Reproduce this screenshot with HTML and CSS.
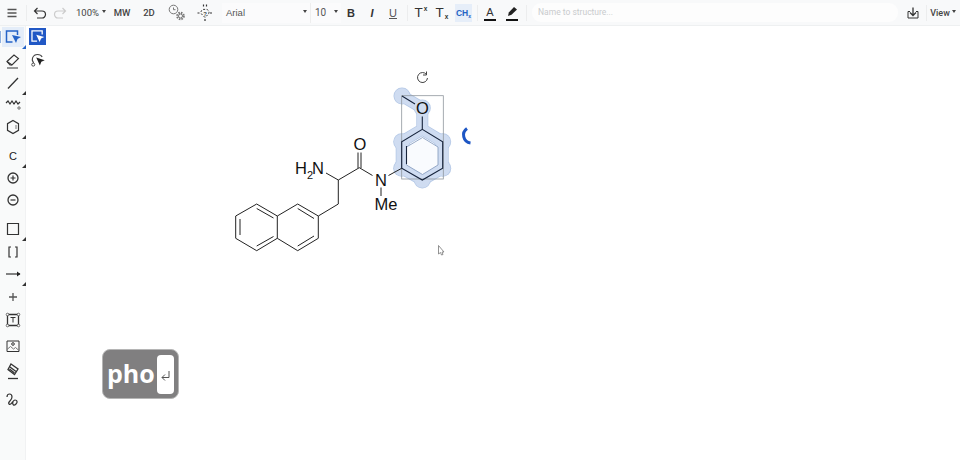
FILE: index.html
```html
<!DOCTYPE html>
<html lang="en">
<head>
<meta charset="utf-8">
<title>Structure editor</title>
<link rel="stylesheet" href="styles.css">
</head>
<body>
<header class="toolbar">
  <button class="tb w20 ml2"><svg viewBox="0 0 20 20"><path d="M5.500 6.500h9M5.500 10h9M5.500 13.500h9" class="s13 grey2"/></svg></button>
  <span class="sep ml4"></span>
  <button class="tb w20 ml3"><svg viewBox="0 0 20 20"><path d="M7.500 5 4.500 8l3 3M4.500 8h7.500a3.500 3.500 0 0 1 0 7H7" class="s12"/></svg></button>
  <button class="tb w20"><svg viewBox="0 0 20 20"><path d="M12.500 5l3 3-3 3M15.500 8H8a3.500 3.500 0 0 0 0 7h5" class="s12 faint"/></svg></button>
  <button class="tb txt w30 ml6">100%<i class="caret"></i></button>
  <button class="tb txt med w20 ml6">MW</button>
  <button class="tb txt med w20 ml7">2D</button>
  <button class="tb w20 ml8"><svg viewBox="0 0 20 20"><circle cx="6.500" cy="6.500" r="4.300" class="s1 grey"/><path d="M6.500 4.500v2.200h2" class="s1 grey"/><circle cx="13.500" cy="13" r="3.300" class="s2 grey dash-gear"/><circle cx="13.500" cy="13" r="2" class="s1 grey"/></svg></button>
  <button class="tb w20 ml8"><svg viewBox="0 0 20 20"><path d="M10 14.500 6.500 11a3 3 0 0 1 3.500-4.500 3 3 0 0 1 3.500 4.500z" class="s1 dash"/><path d="M2.500 10h2.500M15 10h2.500M8.500 1.500v3M11.500 1.500v3M10 16v3" class="s12 dash"/><text x="10" y="12.500" class="qmark">?</text></svg></button>
  <div class="select font ml7">Arial<i class="caret"></i></div>
  <div class="select size">10<i class="caret"></i></div>
  <button class="tb fmt w20 b">B</button>
  <button class="tb fmt w20 ml1 it">I</button>
  <button class="tb fmt w20 ml1 un">U</button>
  <span class="sep ml4"></span>
  <button class="tb fmt big w20 ml3"><span>T<sup>x</sup></span></button>
  <button class="tb fmt big w20 ml1"><span>T<sub>x</sub></span></button>
  <button class="tb chem ml3"><span>CH<sub>x</sub></span></button>
  <span class="sep ml5"></span>
  <button class="tb fmt colour ml6">A</button>
  <button class="tb colour pen ml10"><svg viewBox="0 0 12 15"><path d="M2 12l.8-3.500L8 3l3 2.500-5.500 5.300z" class="fillk"/></svg></button>
  <span class="sep ml8"></span>
  <div class="search">Name to structure...</div>
  <button class="tb w20 ml5"><svg viewBox="0 0 20 20"><path d="M10 4.500v7.500M7 9.500l3 3 3-3" class="s13"/><path d="M7 8.500H5v6.500h10V8.500h-2" class="s1"/></svg></button>
  <span class="sep ml3"></span>
  <button class="tb txt med view ml4">View<i class="caret"></i></button>
</header>
<div class="body">
  <nav class="side">
    <button class="tool active corner"><svg viewBox="0 0 20 20"><path d="M14.500 8V4h-11v11h6" class="s15 blue"/><path d="M9 8l9 2-3.500 2-1.500 4z" class="fillb"/></svg></button>
    <button class="tool g3"><svg viewBox="0 0 20 20"><path d="M4 11.500 11 5l4.500 3.500-6.500 6.500H7z" class="s11"/><path d="M4 11.500l5 3.500M4 18h11" class="s11"/></svg></button>
    <button class="tool g3 corner"><svg viewBox="0 0 20 20"><path d="M5 15.500 15 5" class="s13"/></svg></button>
    <button class="tool g1"><svg viewBox="0 0 20 20"><path d="M3 9l2-2 2 3 2-3 2 3 2-3 2 3 2-2" class="s12"/><path d="M15 13h2v2h-2z" class="s1 grey"/></svg></button>
    <button class="tool g3 corner"><svg viewBox="0 0 20 20"><path d="M10 3.500l5.500 3.200v6.600L10 16.500l-5.500-3.200V6.700z" class="s12"/><path d="M13 8v4" class="s1 grey"/></svg></button>
    <button class="tool g9 corner lett">C</button>
    <button class="tool g2"><svg viewBox="0 0 20 20"><circle cx="10" cy="10" r="5" class="s13"/><path d="M7.500 10h5M10 7.500v5" class="s12"/></svg></button>
    <button class="tool g2"><svg viewBox="0 0 20 20"><circle cx="10" cy="10" r="5" class="s13"/><path d="M7.500 10h5" class="s12"/></svg></button>
    <button class="tool g9 corner"><svg viewBox="0 0 20 20"><path d="M4.500 4.500h11v11h-11z" class="s12"/></svg></button>
    <button class="tool g3"><svg viewBox="0 0 20 20"><path d="M8 5H6v10h2M12 5h2v10h-2" class="s12"/></svg></button>
    <button class="tool g2 corner"><svg viewBox="0 0 20 20"><path d="M3 10h14" class="s12"/><path d="M14 7.500l3.500 2.500-3.500 2.500z" class="fillk"/></svg></button>
    <button class="tool g3"><svg viewBox="0 0 20 20"><path d="M6 10h8M10 6v8" class="s13 grey2"/></svg></button>
    <button class="tool g3"><svg viewBox="0 0 20 20"><path d="M4.500 4.500h11v11h-11z" class="s13"/><path d="M7.500 7.500h5M10 7.500v5" class="s1"/><circle cx="4.500" cy="4.500" r="1.300" class="dot"/><circle cx="15.500" cy="4.500" r="1.300" class="dot"/><circle cx="4.500" cy="15.500" r="1.300" class="dot"/><circle cx="15.500" cy="15.500" r="1.300" class="dot"/></svg></button>
    <button class="tool g6"><svg viewBox="0 0 20 20"><path d="M4 5h12v10.500H4z" class="s1"/><circle cx="10" cy="8" r="1.300" class="s1"/><path d="M4 13.500l3.500-3 3 2.500 2-1.500 3.500 3" class="s1 grey"/></svg></button>
    <button class="tool g5"><svg viewBox="0 0 20 20"><path d="M8 3l7 5-3.500 5.500L5 8.500z" class="s13"/><path d="M7 6l6 4.500M6.500 8l5 4" class="s13"/><path d="M5 17.500h10" class="s13"/></svg></button>
    <button class="tool g8"><svg viewBox="0 0 20 20"><path d="M4 8c0-4 5-4 5 0s-5 5-3 7 4-4 6-4 3 2 1 4-4 1-3-2" class="s12"/></svg></button>
  </nav>
  <main class="canvas">
    <div class="flyout">
      <button class="fly on"><svg viewBox="0 0 20 20"><path d="M15.500 7.500V3.500H3.500v12h6" class="s15 white"/><path d="M8.500 8l9.500 2.500-3.800 1.800-1.700 4.200z" class="fillw"/></svg></button>
      <button class="fly"><svg viewBox="0 0 20 20"><path d="M5.500 14C2 10.500 4.500 4 10 4c2.500 0 4.500 1 5.500 3" class="s12 dark"/><circle cx="5" cy="16" r="1.800" class="s1"/><path d="M8.500 7.500l10 3.500-4 1.700-1.700 4.300z" class="fillk"/></svg></button>
    </div>
    <svg class="chem-art" viewBox="0 0 960 460" xmlns="http://www.w3.org/2000/svg">
      <g class="halo-edge">
        <path d="M402 96 422.300 108V129.300L442.700 141.700V168.300L422.300 180 401.700 168.300V141.700L422.300 129.300"/>
        <circle cx="402" cy="96" r="8.500"/><circle cx="422.300" cy="108" r="8.500"/><circle cx="442.700" cy="141.700" r="8.500"/><circle cx="442.700" cy="168.300" r="8.500"/><circle cx="422.300" cy="180" r="8.500"/><circle cx="401.700" cy="168.300" r="8.500"/><circle cx="401.700" cy="141.700" r="8.500"/>
      </g>
      <g class="halo">
        <path d="M402 96 422.300 108V129.300L442.700 141.700V168.300L422.300 180 401.700 168.300V141.700L422.300 129.300"/>
        <circle cx="402" cy="96" r="7.700"/><circle cx="422.300" cy="108" r="7.700"/><circle cx="442.700" cy="141.700" r="7.700"/><circle cx="442.700" cy="168.300" r="7.700"/><circle cx="422.300" cy="180" r="7.700"/><circle cx="401.700" cy="168.300" r="7.700"/><circle cx="401.700" cy="141.700" r="7.700"/>
      </g>
      <path class="inner-white" d="M422.500 137.500 438 147V165L422.500 174.500 406.500 165V147Z"/>
      <rect x="401.700" y="95.700" width="41.600" height="83.300" class="box"/>
      <g class="bond">
        <path d="M235.700 216V238.300L256.700 250.700 277.300 238.300 297.700 250.700 318.300 238.300V216L297.700 204 277.300 216 256.700 204Z"/>
        <path d="M277.300 216V238.300"/>
        <path d="M240 219V235M256.700 208.500 273.500 218M273.500 236.500 256.700 246M297.700 208.500 314 218.500M314 236 297.700 246"/>
        <path d="M318.300 216 338.300 204V180L326 173M338.300 180 359.300 167.700 372.500 175.500M358 168V152.500M361 168V152.500M381 187.500V196M388.500 175.500 401.700 168.300"/>
        <path class="sel" d="M401.700 168.300V141.700L422.300 129.300 442.700 141.700V168.300L422.300 180ZM422.300 129.300V116.500M415 104 402 96"/>
        <path class="sel" d="M406.500 164V146"/>
      </g>
      <text x="295" y="174" class="atom">H</text><text x="307" y="179" class="atom sm">2</text><text x="312" y="174" class="atom">N</text>
      <text x="360" y="150" class="atom mid">O</text>
      <text x="381" y="186" class="atom mid">N</text>
      <text x="386" y="209.500" class="atom mid">Me</text>
      <text x="422.300" y="114" class="atom mid">O</text>
      <path class="thin" d="M426.500 74.500A5 5 0 1 0 427.500 78M426.500 71.500V75H423"/>
      <path class="spin" d="M467 128.500A8 8 0 0 0 470.500 143"/>
      <path class="cursor" d="M438.500 245.500V254L440.500 252.500 441.500 255 443 254.500 442 252H444Z"/>
    </svg>
    <div class="badge"><span class="badge-text">pho</span><span class="key"><svg viewBox="0 0 17 39"><path d="M12 16v6.500H5M8 19.500l-3 3 3 3" class="s1 grey2"/></svg></span></div>
  </main>
</div>
</body>
</html>
```
FILE: styles.css
```css
* { box-sizing: border-box; }
html, body { margin: 0; height: 100%; }
body { width: 960px; height: 460px; overflow: hidden; background: #fff; font-family: "Roboto", "Liberation Sans", sans-serif; color: #333; }
button { border: 0; background: none; padding: 0; margin: 0; font: inherit; color: inherit; display: flex; align-items: center; justify-content: center; }
svg { display: block; }
.toolbar { height: 26px; background: #f8f9fa; border-bottom: 1px solid #eef0f1; display: flex; align-items: center; }
.tb { height: 20px; flex: none; }
.tb svg { width: 20px; height: 20px; }
.w20 { width: 20px; }
.w30 { width: 30px; }
.ml1 { margin-left: 1px; } .ml2 { margin-left: 2px; } .ml3 { margin-left: 3px; } .ml4 { margin-left: 4px; }
.ml5 { margin-left: 5px; } .ml6 { margin-left: 6px; } .ml7 { margin-left: 7px; } .ml8 { margin-left: 8px; } .ml10 { margin-left: 10px; }
.sep { width: 1px; height: 16px; background: #ecedee; flex: none; }
.txt { font-size: 9.500px; color: #444; }
.med { font-weight: 500; }
.caret { display: inline-block; margin-left: 3px; margin-bottom: 2px; border-left: 2.500px solid transparent; border-right: 2.500px solid transparent; border-top: 3px solid #444; }
.select { height: 20px; background: #fbfbfc; display: flex; align-items: center; justify-content: space-between; font-size: 9.500px; color: #555; flex: none; }
.font { width: 88px; padding: 0 3px 0 4px; font-family: "Liberation Sans", sans-serif; }
.size { width: 31px; padding: 0 3px 0 4px; border-left: 1px solid #eee; font-size: 10px; }
.fmt { font-family: "Liberation Sans", sans-serif; font-size: 11px; color: #333; }
.b { font-weight: 700; }
.it { font-style: italic; font-weight: 700; }
.un { text-decoration: underline; color: #555; }
.big { font-size: 13.500px; font-weight: 400; }
.big sup, .big sub { font-size: 6.500px; line-height: 0; font-weight: 700; margin-left: 1px; }
.big sup { vertical-align: 6px; }
.big sub { vertical-align: -2px; }
.chem { width: 17px; height: 18px; background: #e6eef9; color: #2463c4; font-size: 8.500px; font-weight: 700; font-family: "Liberation Sans", sans-serif; }
.chem sub { font-size: 5px; line-height: 0; vertical-align: -2px; }
.colour { width: 12px; height: 17px; border-bottom: 2px solid #111; }
.pen { width: 12px; }
.colour svg { width: 12px; height: 15px; }
.search { width: 366px; margin-left: 5px; height: 19px; padding-left: 6px; border-radius: 9px; background: #fdfdfd; font-size: 8.500px; line-height: 19px; color: #c9cbcd; flex: none; }
.view { width: 24px; font-size: 9px; color: #444; }
.view .caret { margin-left: 2px; flex: none; }
.qmark { font: 700 6px "Liberation Sans", sans-serif; text-anchor: middle; fill: #444; }
.body { display: flex; height: 434px; }
.side { width: 26px; flex: none; background: #f9fafa; border-right: 1px solid #f1f2f3; padding-top: 1px; display: flex; flex-direction: column; }
.tool { width: 22px; height: 20px; margin-left: 2px; position: relative; flex: none; }
.tool svg { width: 20px; height: 20px; }
.corner::after { content: ""; position: absolute; right: -2px; bottom: -2px; border-left: 4px solid transparent; border-bottom: 4px solid #333; }
.active { background: #e4edf9; }
.active::before { content: ""; position: absolute; left: -2px; top: 4px; width: 1px; height: 12px; background: #8fb0df; }
.active.corner::after { border-bottom-color: #2563c7; }
.lett { font: 400 11px "Liberation Sans", sans-serif; color: #222; }
.g1 { margin-top: 1px; } .g2 { margin-top: 2px; } .g3 { margin-top: 3px; } .g5 { margin-top: 5px; }
.g6 { margin-top: 6px; } .g8 { margin-top: 8px; } .g9 { margin-top: 9px; }
.canvas { flex: 1; position: relative; background: #fff; }
.flyout { position: absolute; left: 3px; top: 2px; width: 17px; display: flex; flex-direction: column; gap: 6px; }
.fly { width: 17px; height: 17px; }
.fly svg { width: 17px; height: 17px; }
.on { background: #2158c5; }
.chem-art { position: absolute; left: -26px; top: -26px; width: 960px; height: 460px; }
.halo-edge path, .halo path { fill: none; stroke-linejoin: round; }
.halo-edge path { stroke: #b4c8e6; stroke-width: 12; }
.halo-edge circle { fill: #b4c8e6; }
.halo path { stroke: #cfdcf1; stroke-width: 10.500; }
.halo circle { fill: #cfdcf1; }
.box { fill: none; stroke: #8f969d; stroke-width: 0.800; }
.inner-white { fill: #f9fbfe; stroke: #8ba0c2; stroke-width: 0.900; }
.bond path { fill: none; stroke: #222; stroke-width: 1; }
.bond path.sel { stroke: #16233b; stroke-width: 1.100; }
.atom { font: 400 16.500px "Liberation Sans", sans-serif; fill: #111; }
.sm { font-size: 11px; }
.mid { text-anchor: middle; }
.thin { fill: none; stroke: #444; stroke-width: 1; }
.spin { fill: none; stroke: #1d56c4; stroke-width: 3; }
.cursor { fill: #fff; stroke: #777; stroke-width: 0.800; }
.badge { position: absolute; left: 76px; top: 323px; width: 77px; height: 50px; background: #807f80; border: 1px solid #b5b5b5; border-radius: 8px; display: flex; align-items: center; padding-left: 4px; }
.badge-text { font: 700 25px "Open Sans", "DejaVu Sans", sans-serif; color: #fff; line-height: 1; width: 50px; padding-bottom: 2px; }
.key { width: 17px; height: 39px; background: #fff; border-radius: 4px; flex: none; }
.key svg { width: 17px; height: 39px; }
.s1, .s11, .s12, .s13, .s15, .s2 { fill: none; stroke: #333; }
.s1 { stroke-width: 1; } .s11 { stroke-width: 1.100; } .s12 { stroke-width: 1.200; } .s13 { stroke-width: 1.300; } .s15 { stroke-width: 1.500; } .s2 { stroke-width: 2; }
.grey { stroke: #777; }
.grey2 { stroke: #555; }
.faint { stroke: #ccc; }
.dash { stroke-dasharray: 2 1.500; }
.dash-gear { stroke-dasharray: 1.500 1.100; }
.blue { stroke: #2563c7; }
.white { stroke: #fff; }
.dark { stroke: #444; }
.fillk { fill: #222; }
.fillb { fill: #2563c7; }
.fillw { fill: #fff; }
.dot { fill: #fff; stroke: #444; stroke-width: 0.700; }
```
